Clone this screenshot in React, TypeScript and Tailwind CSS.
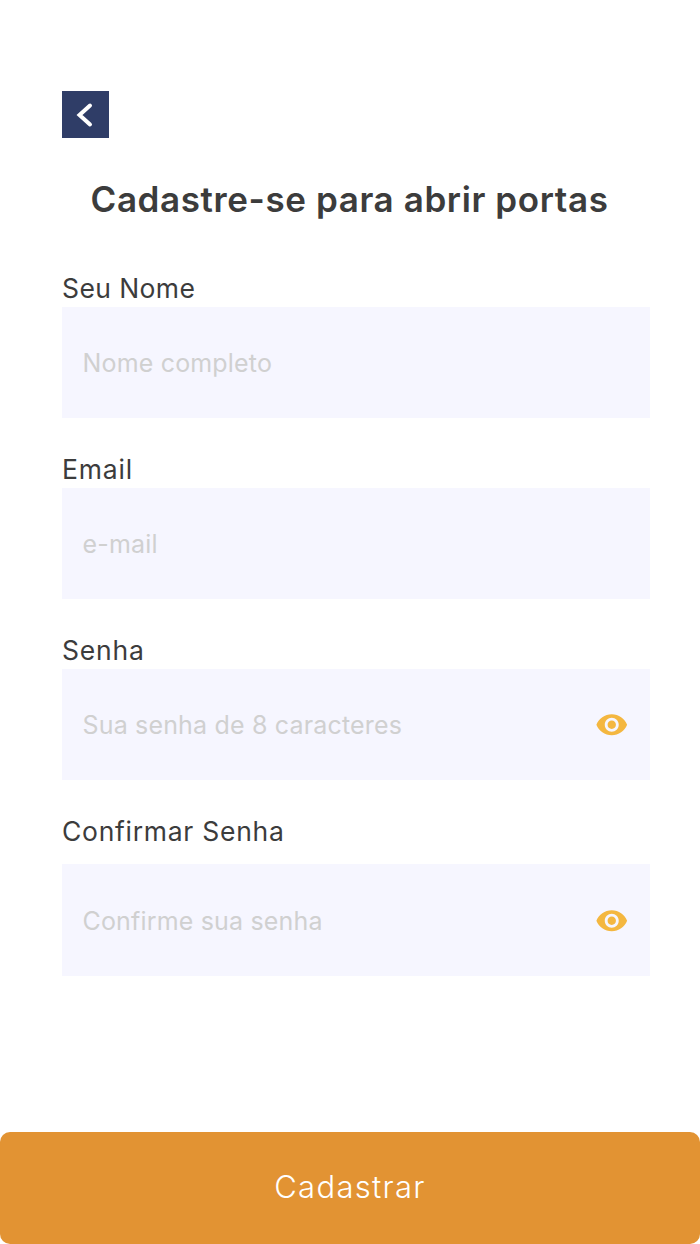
import { useState } from 'react'
import { MdVisibility } from 'react-icons/md'

type FieldProps = {
  id: string
  label: string
  placeholder: string
  type?: string
  labelClass: string
  boxClass: string
}

function Field({ id, label, placeholder, type = 'text', labelClass, boxClass }: FieldProps) {
  const [visible, setVisible] = useState(false)
  const isPassword = type === 'password'

  return (
    <div className="flex flex-col">
      <label htmlFor={id} className={`text-[26.5px] leading-[34px] whitespace-nowrap text-[#3c3c3c] ${labelClass}`}>
        {label}
      </label>
      <div className={`flex items-center bg-[#f6f6ff] pr-[21.5px] pl-[20.5px] ${boxClass}`}>
        <input
          id={id}
          type={isPassword && visible ? 'text' : type}
          placeholder={placeholder}
          className="h-full min-w-0 flex-1 bg-transparent text-[25px] tracking-[0.17px] text-[#3c3c3c] outline-none placeholder:text-[#d0d0d0]"
        />
        {isPassword && (
          <button type="button" aria-label="Mostrar senha" onClick={() => setVisible(!visible)}>
            <MdVisibility className="size-[33.5px] text-[#f4b740]" />
          </button>
        )}
      </div>
    </div>
  )
}

export default function App() {
  return (
    <main className="flex h-[1244px] w-[700px] flex-col bg-white font-['Inter',sans-serif]">
      <div className="flex flex-1 flex-col pt-[91px] pr-[50px] pl-[62px]">
        {/* Back */}
        <button type="button" aria-label="Voltar" className="flex size-[47px] items-center justify-center bg-[#2f3d67]">
          <svg viewBox="0 0 47 47" className="size-full" fill="none" stroke="#fff" strokeWidth="4" strokeLinecap="round">
            <path d="M28 14.5 17.5 24l10.5 9.5" />
          </svg>
        </button>

        <h1 className="mt-[37px] ml-[28.5px] h-12 text-[35px] leading-[48px] font-semibold tracking-[0.6px] whitespace-nowrap text-[#3c3c3c]">
          Cadastre-se para abrir portas
        </h1>

        {/* Form */}
        <form className="mt-[48px] flex flex-col gap-[34px]">
          <Field id="nome" label="Seu Nome" placeholder="Nome completo" labelClass="h-9 tracking-[0.4px]" boxClass="h-[111px]" />
          <Field id="email" label="Email" placeholder="e-mail" labelClass="h-9 tracking-[0.85px]" boxClass="h-[111px]" />
          <Field id="senha" label="Senha" placeholder="Sua senha de 8 caracteres" type="password" labelClass="h-9 tracking-[0.8px]" boxClass="h-[111px]" />
          <Field id="confirmar" label="Confirmar Senha" placeholder="Confirme sua senha" type="password" labelClass="h-[50px] tracking-[0.72px]" boxClass="h-[112px] pt-px" />
        </form>
      </div>

      <button type="submit" className="h-28 w-full rounded-[10px] bg-[#e29333] pb-0.5 text-[31px] font-light tracking-[1.3px] text-white">
        Cadastrar
      </button>
    </main>
  )
}
